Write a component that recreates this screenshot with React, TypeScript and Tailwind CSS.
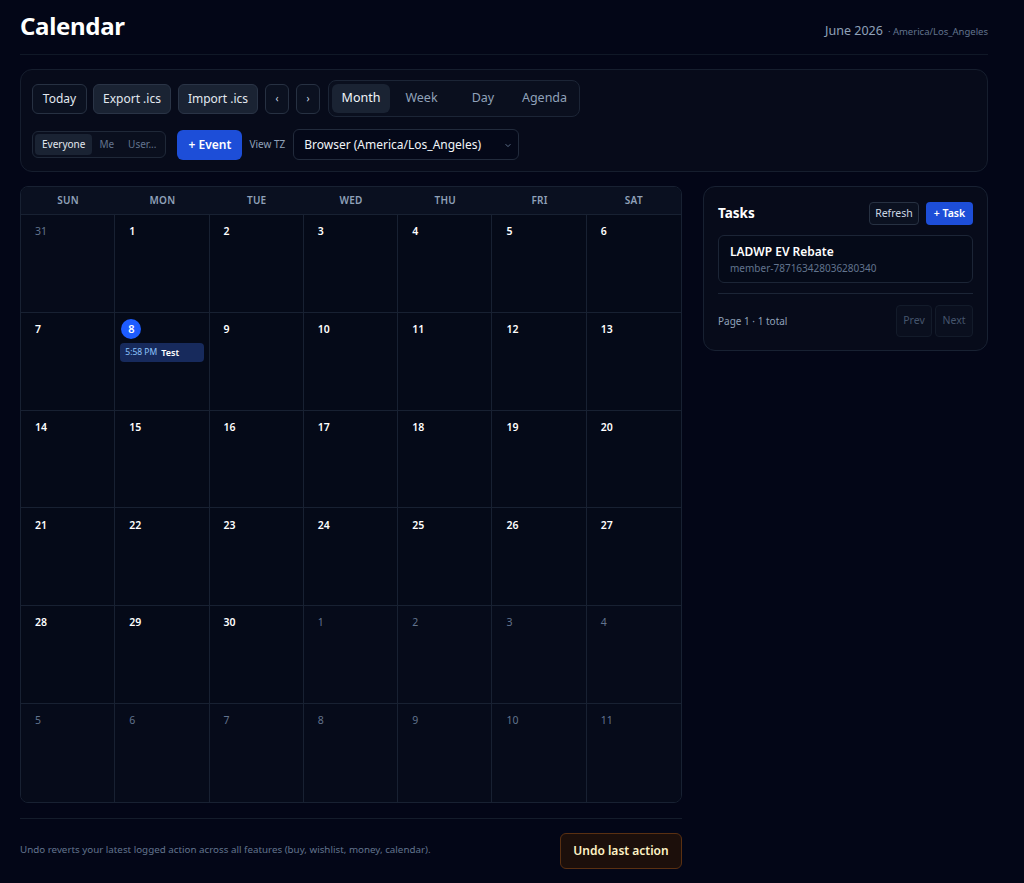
import * as React from "react";

const weekDays = ["SUN", "MON", "TUE", "WED", "THU", "FRI", "SAT"];

type Cell = { day: number; inMonth: boolean };

function buildCells(): Cell[] {
  const cells: Cell[] = [{ day: 31, inMonth: false }];
  for (let d = 1; d <= 30; d++) cells.push({ day: d, inMonth: true });
  let next = 1;
  while (cells.length < 42) cells.push({ day: next++, inMonth: false });
  return cells;
}

function Btn({ children, filled, w }: { children: React.ReactNode; filled?: boolean; w: string }) {
  return (
    <button
      type="button"
      className={
        "h-[30px] rounded-md border text-[12px] text-slate-200 " +
        w +
        " " +
        (filled ? "bg-[#1a2333] border-[#2a3446]" : "bg-[#0b1120] border-[#273142]")
      }
    >
      {children}
    </button>
  );
}

export default function App() {
  const cells = buildCells();
  const [view, setView] = React.useState("Month");
  const [who, setWho] = React.useState("Everyone");

  const viewWidths: Record<string, string> = {
    Month: "w-[58px]",
    Week: "w-[63px]",
    Day: "w-[60px]",
    Agenda: "w-[63px]",
  };

  return (
    <div
      className="min-h-[883px] bg-[#030617] text-slate-200 pl-5 pr-[36px]"
      style={{ fontFamily: '"Noto Sans", "Open Sans", sans-serif' }}
    >
      <header className="flex items-center justify-between pt-[11px] pb-[13px] border-b border-[#101827]">
        <h1 className="text-[24px] font-bold text-white leading-[30px] tracking-[-0.3px]">Calendar</h1>
        <div className="mt-[10px] flex items-baseline gap-[5px]">
          <span className="text-[12.5px] text-slate-400">June 2026</span>
          <span className="text-[9.5px] text-slate-500">· America/Los_Angeles</span>
        </div>
      </header>

      <section className="mt-[14px] rounded-xl border border-[#161e2e] bg-[#070b1a] px-[11px] pt-[10px] pb-[11px]">
        <div className="flex items-center gap-[6px]">
          <Btn w="w-[55px]">Today</Btn>
          <Btn filled w="w-[78px]">Export .ics</Btn>
          <Btn filled w="w-[80px] ml-[1px]">Import .ics</Btn>
          <button type="button" className="ml-[1px] h-[30px] w-[24px] rounded-md border border-[#273142] bg-[#0b1120] text-[10px] text-slate-300">
            ‹
          </button>
          <button type="button" className="ml-[1px] h-[30px] w-[24px] rounded-md border border-[#273142] bg-[#0b1120] text-[10px] text-slate-300">
            ›
          </button>
          <div className="ml-[2px] flex items-center rounded-lg border border-[#1c2536] bg-[#0a0f1e] p-[3px]">
            {["Month", "Week", "Day", "Agenda"].map((v) => (
              <button
                key={v}
                type="button"
                onClick={() => setView(v)}
                className={
                  "h-[29px] rounded-md text-[12.5px] " +
                  viewWidths[v] +
                  " " +
                  (view === v ? "bg-[#1a2333] text-slate-100" : "text-slate-400")
                }
              >
                {v}
              </button>
            ))}
          </div>
        </div>

        <div className="mt-[12px] flex items-center">
          <div className="flex items-center rounded-md border border-[#1f2838] bg-[#0a0f1e] p-[2px]">
            {["Everyone", "Me", "User..."].map((w) => (
              <button
                key={w}
                type="button"
                onClick={() => setWho(w)}
                className={
                  "h-[21px] px-[7px] rounded text-[10px] " +
                  (who === w ? "bg-[#1a2333] text-slate-200" : "text-slate-500")
                }
              >
                {w}
              </button>
            ))}
          </div>
          <button type="button" className="ml-[11px] h-[30px] w-[65px] rounded-md bg-[#1d4ed8] text-[12px] font-semibold text-white">
            + Event
          </button>
          <span className="ml-[7px] text-[10px] text-slate-400">View TZ</span>
          <div className="ml-[8px] flex h-[31px] w-[226px] items-center justify-between rounded-md border border-[#222b3c] bg-[#040818] pl-[10px] pr-[6px]">
            <span className="text-[12px] text-slate-100">Browser (America/Los_Angeles)</span>
            <svg width="8" height="8" viewBox="0 0 10 10" className="text-slate-500">
              <path d="M2 4l3 3 3-3" stroke="currentColor" strokeWidth="1.2" fill="none" />
            </svg>
          </div>
        </div>
      </section>

      <div className="mt-[14px] grid grid-cols-[662px_285px] gap-[21px]">
        <div>
          <div className="overflow-hidden rounded-lg border border-[#182132] bg-[#050a18]">
            <div className="grid grid-cols-7 bg-[#0a1020] border-b border-[#182132]">
              {weekDays.map((d) => (
                <div key={d} className="h-[27px] flex items-center justify-center text-[10px] font-semibold text-slate-400 tracking-wide">
                  {d}
                </div>
              ))}
            </div>
            <div className="grid grid-cols-7 grid-rows-6">
              {cells.map((c, i) => {
                const today = c.inMonth && c.day === 8;
                const col = i % 7;
                const row = Math.floor(i / 7);
                return (
                  <div
                    key={i}
                    className={
                      "h-[97.8px] px-[5px] pt-[7px] " +
                      (col < 6 ? "border-r border-[#182132] " : "") +
                      (row < 5 ? "border-b border-[#182132] " : "") +
                      (c.inMonth ? "" : "bg-[#060b1a]")
                    }
                  >
                    {today ? (
                      <div className="-mt-[1px] ml-[1px] flex h-[20px] w-[20px] items-center justify-center rounded-full bg-[#1d5cff] text-[11px] font-semibold text-white">
                        {c.day}
                      </div>
                    ) : (
                      <div
                        className={
                          "h-[20px] pl-[9px] flex items-center text-[10.5px] " +
                          (c.inMonth ? "font-semibold text-white" : "text-slate-500")
                        }
                      >
                        {c.day}
                      </div>
                    )}
                    {today && (
                      <div className="mt-[4px] flex h-[19px] items-center gap-[4px] rounded bg-[#172a5c] px-[5px]">
                        <span className="text-[8.5px] text-blue-300">5:58 PM</span>
                        <span className="text-[9px] font-semibold text-white">Test</span>
                      </div>
                    )}
                  </div>
                );
              })}
            </div>
          </div>

          <footer className="mt-[15px] border-t border-[#141c2b] pt-[14px] flex items-center justify-between">
            <p className="text-[9.8px] text-slate-500">
              Undo reverts your latest logged action across all features (buy, wishlist, money, calendar).
            </p>
            <button
              type="button"
              className="h-[36px] w-[122px] rounded-md border border-[#5a3012] bg-[#1c0f0b] text-[12px] font-semibold text-amber-100"
            >
              Undo last action
            </button>
          </footer>
        </div>

        <aside className="self-start rounded-xl border border-[#182132] bg-[#070b1a] px-[14px] pt-[15px] pb-[13px]">
          <div className="flex items-center justify-between">
            <h2 className="text-[13.5px] font-bold text-white">Tasks</h2>
            <div className="flex items-center gap-[7px]">
              <button type="button" className="h-[23px] w-[50px] rounded border border-[#273142] bg-[#0b1120] text-[10.5px] text-slate-300">
                Refresh
              </button>
              <button type="button" className="h-[23px] w-[47px] rounded bg-[#1d4ed8] text-[10.5px] font-semibold text-white">
                + Task
              </button>
            </div>
          </div>
          <div className="mt-[10px] rounded-md border border-[#1c2536] bg-[#050a18] px-[11px] pt-[7px] pb-[6px]">
            <div className="text-[12px] leading-[18px] font-semibold text-white">LADWP EV Rebate</div>
            <div className="text-[10px] leading-[15px] text-slate-500">member-787163428036280340</div>
          </div>
          <div className="mt-[10px] border-t border-[#1c2536] pt-[11px] flex items-center justify-between">
            <span className="text-[10px] text-slate-400">Page 1 · 1 total</span>
            <div className="flex gap-[3px]">
              <button type="button" className="h-[32px] w-[36px] rounded border border-[#131b2a] bg-[#0a0f1e] text-[10.5px] text-slate-600">
                Prev
              </button>
              <button type="button" className="h-[32px] w-[38px] rounded border border-[#131b2a] bg-[#0a0f1e] text-[10.5px] text-slate-600">
                Next
              </button>
            </div>
          </div>
        </aside>
      </div>
    </div>
  );
}
